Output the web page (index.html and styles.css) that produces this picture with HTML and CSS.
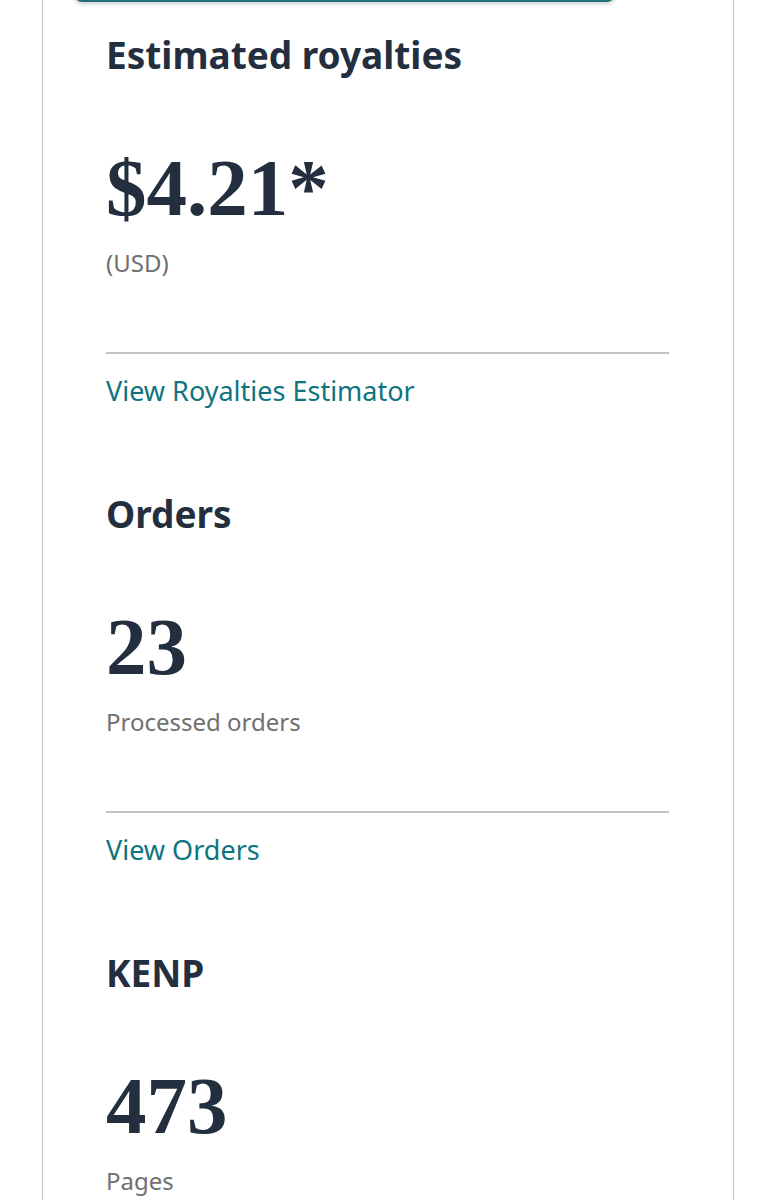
FILE: index.html
```html
<!DOCTYPE html>
<html lang="en">
<head>
<meta charset="utf-8">
<title>Dashboard</title>
<link rel="stylesheet" href="styles.css">
</head>
<body>
<div class="card">
  <div class="top-button"></div>
  <section class="metric first">
    <h2 class="metric-title">Estimated royalties</h2>
    <div class="metric-value">$4.21*</div>
    <div class="metric-sub">(USD)</div>
    <hr class="divider">
    <a class="metric-link" href="#">View Royalties Estimator</a>
  </section>
  <section class="metric">
    <h2 class="metric-title">Orders</h2>
    <div class="metric-value">23</div>
    <div class="metric-sub">Processed orders</div>
    <hr class="divider">
    <a class="metric-link" href="#">View Orders</a>
  </section>
  <section class="metric">
    <h2 class="metric-title">KENP</h2>
    <div class="metric-value">473</div>
    <div class="metric-sub">Pages</div>
  </section>
</div>
</body>
</html>
```
FILE: styles.css
```css
html, body {
  margin: 0;
  padding: 0;
  background: #ffffff;
}
body {
  font-family: "Noto Sans", Lato, sans-serif;
  overflow: hidden;
}
.card {
  margin: -40px 0 0 42px;
  width: 692px;
  min-height: 1400px;
  box-sizing: border-box;
  border-left: 1.5px solid #c4c4c4;
  border-right: 1.5px solid #c4c4c4;
  padding: 0 64px 0 63px;
}
.top-button {
  height: 42px;
  margin: 0 54px 0 -32px;
  background: #23707a;
  border-radius: 0 0 8px 8px;
  box-shadow: 0 2px 4px rgba(0, 0, 0, 0.18);
}
.metric {
  display: flex;
  flex-direction: column;
  align-items: flex-start;
  margin-top: 88px;
}
.metric.first {
  margin-top: 33px;
}
.metric-title {
  margin: 0;
  font-size: 37px;
  line-height: 40px;
  font-weight: 700;
  color: #232f3e;
}
.metric-value {
  margin-top: 73px;
  font-family: "Liberation Serif", serif;
  font-weight: 700;
  font-size: 81px;
  line-height: 80px;
  color: #232f3e;
}
.metric-sub {
  margin-top: 21px;
  font-size: 24px;
  line-height: 28px;
  color: #707070;
}
.divider {
  align-self: stretch;
  margin: 75px 0 0 0;
  border: 0;
  height: 2px;
  background: #c2c2c2;
}
.metric-link {
  margin-top: 22px;
  font-size: 27px;
  line-height: 30px;
  color: #0e7580;
  text-decoration: none;
}
```
